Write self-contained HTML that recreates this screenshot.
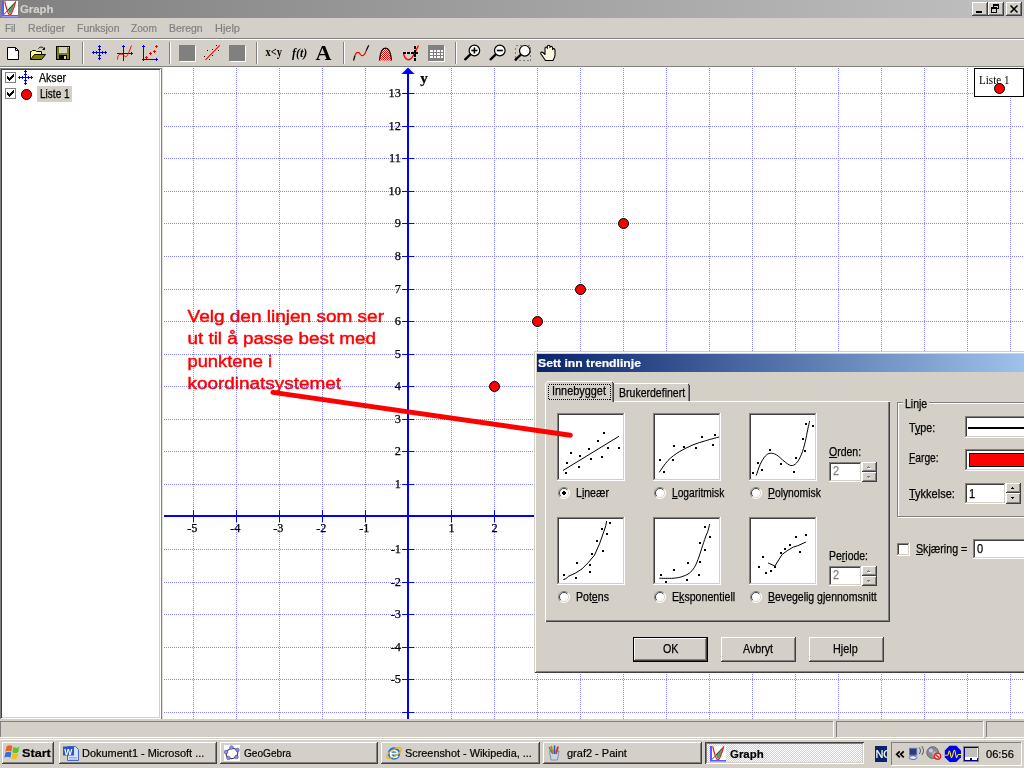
<!DOCTYPE html>
<html lang="no"><head><meta charset="utf-8"><title>Graph</title>
<style>
*{box-sizing:border-box}
html,body{margin:0;padding:0}
body{width:1024px;height:768px;overflow:hidden;background:#d4d0c8;position:relative;font-family:"Liberation Sans",sans-serif;font-size:11px;color:#000}
.a{position:absolute}
.t{position:absolute;white-space:nowrap;line-height:14px;font-size:11px;-webkit-text-stroke:.2px currentColor}
.ms{position:absolute;white-space:nowrap;font-size:12.5px;line-height:14px;transform:scaleX(.88);transform-origin:0 0;-webkit-text-stroke:.25px currentColor}
.ms u{text-decoration:underline;text-underline-offset:1px;text-decoration-thickness:1px}
.raised{box-shadow:inset -1px -1px #404040,inset 1px 1px #fff,inset -2px -2px #808080,inset 2px 2px #d4d0c8;background:#d4d0c8}
.sunken{box-shadow:inset -1px -1px #fff,inset 1px 1px #808080,inset -2px -2px #d4d0c8,inset 2px 2px #404040;background:#fff}
.thin-sunken{box-shadow:inset -1px -1px #fff,inset 1px 1px #808080}
.sep{position:absolute;width:2px;border-left:1px solid #808080;border-right:1px solid #fff}
svg{position:absolute;overflow:visible}
.btn{position:absolute;height:25px;width:75px}
</style></head>
<body>
<div id="screen" style="position:absolute;left:0;top:0;width:1024px;height:768px;overflow:hidden;will-change:transform">
<div class="a" id="titlebar" style="left:0;top:0;width:1024px;height:18px;background:linear-gradient(to right,#808080,#c0c0c0)"></div>
<span class="t" id="L-title" style="left:19.61px;top:2px;transform:scaleX(0.9892);transform-origin:0 0;font-weight:bold;color:#d4d0c8;font-size:11.5px;">Graph</span>
<div class="a raised" id="tb-min" style="left:972px;top:2px;width:16px;height:14px"></div>
<div class="a raised" id="tb-max" style="left:988px;top:2px;width:16px;height:14px"></div>
<div class="a raised" id="tb-close" style="left:1006px;top:2px;width:16px;height:14px"></div>
<svg style="left:0;top:0" width="1024" height="768" viewBox="0 0 1024 768" ><g transform="translate(2,1)"><rect x="0" y="0" width="16" height="16" fill="#fff"/><path d="M5.6,8.6 L12.6,1.4 L10.2,9.5 L8,13.6 Z" fill="#3aa860"/><path d="M0.5,15 L13.5,1" fill="none" stroke="#303030" stroke-width="0.8"/><path d="M2.7,0.3 C4.5,8 6.3,14 8,14 C9.7,14 11.8,7 13.7,0.3" fill="none" stroke="#f01818" stroke-width="1.3"/><g shape-rendering="crispEdges" fill="#5a5aff"><rect x="0" y="0" width="2" height="15"/><rect x="0" y="14" width="16" height="1"/></g><rect x="0" y="15" width="16" height="1" fill="#9898ff" shape-rendering="crispEdges"/></g><g fill="#000" shape-rendering="crispEdges"><rect x="976" y="11" width="6" height="2"/><g transform="translate(-1,-1)"><rect x="994" y="5" width="6" height="2"/><rect x="994" y="7" width="1" height="1"/><rect x="999" y="7" width="1" height="3"/><rect x="998" y="9" width="1" height="1"/><rect x="992" y="8" width="6" height="2"/><rect x="992" y="10" width="1" height="3"/><rect x="997" y="10" width="1" height="3"/><rect x="992" y="13" width="6" height="1"/></g></g><path d="M1010.5,5.5 L1017.5,12.5 M1017.5,5.5 L1010.5,12.5" stroke="#000" stroke-width="1.6" fill="none"/></svg>
<div class="a" id="menubar" style="left:0;top:18px;width:1024px;height:20px;background:#d4d0c8"></div>
<span class="t" id="L-menuFil" style="left:5.21px;top:21px;transform:scaleX(0.9080);transform-origin:0 0;color:#808080;">Fil</span>
<span class="t" id="L-menuRediger" style="left:27.70px;top:21px;transform:scaleX(0.9643);transform-origin:0 0;color:#808080;">Rediger</span>
<span class="t" id="L-menuFunksjon" style="left:76.70px;top:21px;transform:scaleX(0.9527);transform-origin:0 0;color:#808080;">Funksjon</span>
<span class="t" id="L-menuZoom" style="left:131.37px;top:21px;transform:scaleX(0.9201);transform-origin:0 0;color:#808080;">Zoom</span>
<span class="t" id="L-menuBeregn" style="left:169.20px;top:21px;transform:scaleX(0.9491);transform-origin:0 0;color:#808080;">Beregn</span>
<span class="t" id="L-menuHjelp" style="left:214.51px;top:21px;transform:scaleX(0.9928);transform-origin:0 0;color:#808080;">Hjelp</span>
<div class="a" style="left:0;top:38px;width:1024px;height:1px;background:#808080"></div>
<div class="a" style="left:0;top:39px;width:1024px;height:1px;background:#fff"></div>
<div class="a" id="toolbar" style="left:0;top:40px;width:1024px;height:26px;background:#d4d0c8"></div>
<div class="sep" style="left:82px;top:42px;height:22px"></div>
<div class="sep" style="left:169px;top:42px;height:22px"></div>
<div class="sep" style="left:256px;top:42px;height:22px"></div>
<div class="sep" style="left:343px;top:42px;height:22px"></div>
<div class="sep" style="left:455px;top:42px;height:22px"></div>
<svg style="left:0;top:0" width="1024" height="768" viewBox="0 0 1024 768" ><path d="M7.5,47.5 H15.5 L18.5,50.5 V59.5 H7.5 Z" fill="#fff" stroke="#000" stroke-width="1"/><path d="M15.5,47.5 V50.5 H18.5" fill="none" stroke="#000" stroke-width="1"/><path d="M30.5,59.5 V51.5 H31.5 L32.5,50.5 H35.5 L36.5,51.5 H41.5 V54.5" fill="#ffff80" stroke="#000" stroke-width="1"/><path d="M30.5,59.5 L34.5,54.5 H45.5 L41.5,59.5 Z" fill="#808000" stroke="#000" stroke-width="1"/><path d="M38.5,48.5 C40,46.5 43,46.5 44.5,49.5 M42.5,49.5 H44.5 V47.5" fill="none" stroke="#000" stroke-width="1"/><g shape-rendering="crispEdges"><rect x="56" y="46" width="14" height="14" fill="#000"/><rect x="57" y="47" width="12" height="12" fill="#808000"/><rect x="59" y="47" width="8" height="6" fill="#d4d0c8"/><rect x="59" y="55" width="8" height="4" fill="#000"/><rect x="64" y="56" width="2" height="3" fill="#d4d0c8"/><rect x="68" y="47" width="1" height="1" fill="#d4d0c8"/></g><g fill="#0000ff" shape-rendering="crispEdges"><rect x="92" y="52" width="15" height="1"/><rect x="99" y="45" width="1" height="15"/><rect x="98" y="46" width="3" height="1"/><rect x="98" y="58" width="3" height="1"/><rect x="93" y="51" width="1" height="3"/><rect x="105" y="51" width="1" height="3"/><rect x="98" y="49" width="3" height="1"/><rect x="98" y="55" width="3" height="1"/><rect x="96" y="51" width="1" height="3"/><rect x="102" y="51" width="1" height="3"/></g><g fill="#0000ff" shape-rendering="crispEdges"><rect x="123" y="45" width="1" height="16"/><rect x="117" y="53" width="16" height="1"/><rect x="122" y="46" width="3" height="1"/><rect x="131" y="52" width="1" height="3"/></g><path d="M117.5,59.5 C117.5,53 122,53 124.5,56 C127,59 129,52 131.5,45.5" fill="none" stroke="#ff0000" stroke-width="1"/><g fill="#0000ff" shape-rendering="crispEdges"><rect x="143" y="45" width="1" height="16"/><rect x="142" y="59" width="16" height="1"/><rect x="142" y="46" width="3" height="1"/><rect x="156" y="58" width="1" height="3"/></g><g fill="#ff0000" shape-rendering="crispEdges"><rect x="155" y="46" width="3" height="1"/><rect x="156" y="45" width="1" height="3"/><rect x="153" y="51" width="3" height="1"/><rect x="154" y="50" width="1" height="3"/><rect x="149" y="53" width="3" height="1"/><rect x="150" y="52" width="1" height="3"/><rect x="145" y="57" width="3" height="1"/><rect x="146" y="56" width="1" height="3"/></g><g shape-rendering="crispEdges"><rect x="180" y="46" width="16" height="16" fill="#fff"/><rect x="179" y="45" width="16" height="16" fill="#808080"/></g><g shape-rendering="crispEdges"><rect x="230" y="46" width="16" height="16" fill="#fff"/><rect x="229" y="45" width="16" height="16" fill="#808080"/></g><line x1="205.5" y1="59.8" x2="219.8" y2="45.3" stroke="#ff0000" stroke-width="1.1"/><g fill="#000" shape-rendering="crispEdges"><rect x="216" y="45" width="1" height="1"/><rect x="207" y="50" width="1" height="1"/><rect x="212" y="49" width="1" height="1"/><rect x="218" y="50" width="1" height="1"/><rect x="212" y="55" width="1" height="1"/><rect x="204" y="56" width="1" height="1"/><rect x="209" y="59" width="1" height="1"/></g><text x="265.5" y="56.3" font-family="'Liberation Serif',serif" font-weight="bold" font-size="11.5px" textLength="16.5" lengthAdjust="spacingAndGlyphs">x&lt;y</text><text x="292" y="56.6" font-family="'Liberation Serif',serif" font-weight="bold" font-style="italic" font-size="11.5px" textLength="15.3" lengthAdjust="spacingAndGlyphs">f(t)</text><text x="315.5" y="60" font-family="'Liberation Serif',serif" font-weight="bold" font-size="20.5px" textLength="16" lengthAdjust="spacingAndGlyphs">A</text><path d="M353.5,60.5 L355,55.5" fill="none" stroke="#000" stroke-width="1.2"/><path d="M355,55.5 C356.5,51 359,52 360.5,54.5 C362.5,57.5 365,54.5 366.3,50.5" fill="none" stroke="#ff0000" stroke-width="1.2"/><path d="M366.3,50.5 L368.7,45.3" fill="none" stroke="#000" stroke-width="1.2"/><defs><pattern id="dith" width="2" height="2" patternUnits="userSpaceOnUse"><rect x="0" y="0" width="1" height="1" fill="#ff0000"/><rect x="1" y="1" width="1" height="1" fill="#ff0000"/><rect x="1" y="0" width="1" height="1" fill="#fff"/><rect x="0" y="1" width="1" height="1" fill="#fff"/></pattern></defs><path d="M379.5,60.5 C381,44 390,44 391.5,60.5 Z" fill="url(#dith)" stroke="none"/><path d="M379.5,60.5 C381,44 390,44 391.5,60.5" fill="none" stroke="#000" stroke-width="1.2"/><path d="M403.5,53.5 C405,60.5 410,62 413,56 C415,52 417,49 418.5,45.5" fill="none" stroke="#ff0000" stroke-width="1.3"/><g fill="#000" shape-rendering="crispEdges"><rect x="403" y="52" width="3" height="2"/><rect x="407" y="52" width="3" height="2"/><rect x="411" y="52" width="3" height="2"/><rect x="415" y="52" width="3" height="2"/><rect x="414" y="46" width="2" height="3"/><rect x="414" y="50" width="2" height="3"/><rect x="414" y="54" width="2" height="3"/><rect x="414" y="58" width="2" height="3"/></g><g shape-rendering="crispEdges"><rect x="429" y="46" width="16" height="16" fill="#fff"/><rect x="428" y="45" width="16" height="16" fill="#808080"/><rect x="430.0" y="50" width="2.5" height="2" fill="#fff"/><rect x="433.5" y="50" width="2.5" height="2" fill="#fff"/><rect x="437.0" y="50" width="2.5" height="2" fill="#fff"/><rect x="440.5" y="50" width="2.5" height="2" fill="#fff"/><rect x="430.0" y="53" width="2.5" height="2" fill="#fff"/><rect x="433.5" y="53" width="2.5" height="2" fill="#fff"/><rect x="437.0" y="53" width="2.5" height="2" fill="#fff"/><rect x="440.5" y="53" width="2.5" height="2" fill="#fff"/><rect x="430.0" y="56" width="2.5" height="2" fill="#fff"/><rect x="433.5" y="56" width="2.5" height="2" fill="#fff"/><rect x="437.0" y="56" width="2.5" height="2" fill="#fff"/><rect x="440.5" y="56" width="2.5" height="2" fill="#fff"/></g><line x1="465.2" y1="59.3" x2="470.09999999999997" y2="54.7" stroke="#000" stroke-width="2.4" stroke-linecap="round"/><circle cx="474.4" cy="50.5" r="5.3" fill="#fff" fill-opacity="0.9" stroke="#000" stroke-width="1.2"/><rect x="471.4" y="49.7" width="6" height="1.6" fill="#000"/><rect x="473.59999999999997" y="47.5" width="1.6" height="6" fill="#000"/><line x1="490.6" y1="59.3" x2="495.5" y2="54.7" stroke="#000" stroke-width="2.4" stroke-linecap="round"/><circle cx="499.8" cy="50.5" r="5.3" fill="#fff" fill-opacity="0.9" stroke="#000" stroke-width="1.2"/><rect x="496.8" y="49.7" width="6" height="1.6" fill="#000"/><rect x="515.5" y="45.5" width="15" height="15" fill="none" stroke="#808080" stroke-width="1" stroke-dasharray="2 2" shape-rendering="crispEdges"/><line x1="515.5999999999999" y1="59.599999999999994" x2="520.5" y2="55.0" stroke="#000" stroke-width="2.4" stroke-linecap="round"/><circle cx="524.8" cy="50.8" r="5.3" fill="#fff" fill-opacity="0.9" stroke="#000" stroke-width="1.2"/><path d="M545.5,60.5 L541,54 C540,52 542,51.5 543.5,53 L545,54.5 V48.5 C545,46.5 547,46.5 547.3,48.5 V46.5 C547.5,44.8 549.8,44.8 550,46.5 V47.5 C550.3,45.8 552.5,46 552.6,48 V49.5 C553,48 555,48.3 555,50.5 V55 C555,57.5 553.5,58.5 553,60.5 Z" fill="#fff8e0" stroke="#000" stroke-width="1.1" stroke-linejoin="round"/></svg>
<div class="a" style="left:0;top:66px;width:1024px;height:1px;background:#808080"></div>
<div class="a" style="left:0;top:67px;width:162px;height:1px;background:#fff"></div>
<div class="a" id="leftpanel" style="left:0;top:68px;width:161px;height:651px;background:#fff;box-shadow:inset 1px 1px #808080,inset -1px -1px #fff,inset 2px 2px #404040,inset -2px -2px #d4d0c8"></div>
<svg style="left:0;top:0" width="1024" height="768" viewBox="0 0 1024 768" ><g shape-rendering="crispEdges"><rect x="5.5" y="72.5" width="10" height="10" fill="#fff" stroke="#808080" stroke-width="1"/></g><g fill="#000" shape-rendering="crispEdges"><rect x="7" y="76" width="1" height="3"/><rect x="8" y="77" width="1" height="3"/><rect x="9" y="78" width="1" height="3"/><rect x="10" y="77" width="1" height="3"/><rect x="11" y="76" width="1" height="3"/><rect x="12" y="75" width="1" height="3"/><rect x="13" y="74" width="1" height="3"/></g><g shape-rendering="crispEdges"><rect x="5.5" y="88.5" width="10" height="10" fill="#fff" stroke="#808080" stroke-width="1"/></g><g fill="#000" shape-rendering="crispEdges"><rect x="7" y="92" width="1" height="3"/><rect x="8" y="93" width="1" height="3"/><rect x="9" y="94" width="1" height="3"/><rect x="10" y="93" width="1" height="3"/><rect x="11" y="92" width="1" height="3"/><rect x="12" y="91" width="1" height="3"/><rect x="13" y="90" width="1" height="3"/></g><g fill="#0000ff" shape-rendering="crispEdges"><rect x="18" y="77" width="15" height="1"/><rect x="25" y="70" width="1" height="15"/><rect x="24" y="71" width="3" height="1"/><rect x="24" y="83" width="3" height="1"/><rect x="19" y="76" width="1" height="3"/><rect x="31" y="76" width="1" height="3"/><rect x="24" y="74" width="3" height="1"/><rect x="24" y="80" width="3" height="1"/><rect x="22" y="76" width="1" height="3"/><rect x="28" y="76" width="1" height="3"/></g><circle cx="26.5" cy="94.5" r="5" fill="#ff0000" stroke="#000" stroke-width="1"/></svg>
<div class="a" style="left:37px;top:86px;width:35px;height:16px;background:#d4d0c8"></div>
<span class="ms" id="L-akser" style="left:39.42px;top:71px;transform:scaleX(0.8469);transform-origin:0 0;">Akser</span>
<span class="ms" id="L-liste1" style="left:39.50px;top:87px;transform:scaleX(0.8039);transform-origin:0 0;">Liste 1</span>
<div class="a" style="left:161px;top:68px;width:1px;height:651px;background:#808080"></div>
<div class="a" style="left:162px;top:67px;width:1px;height:652px;background:#e2dfd8"></div>
<div class="a" id="graph" style="left:163px;top:67px;width:861px;height:652px;background:#fff"></div>
<svg id="plot" style="left:163px;top:67px" width="861" height="652" viewBox="163 67 861 652">
<g shape-rendering="crispEdges" stroke="#8484ff" stroke-width="1" stroke-dasharray="1 1" fill="none">
<line x1="193.5" y1="68" x2="193.5" y2="719"/><line x1="236.5" y1="68" x2="236.5" y2="719"/><line x1="279.5" y1="68" x2="279.5" y2="719"/><line x1="322.5" y1="68" x2="322.5" y2="719"/><line x1="365.5" y1="68" x2="365.5" y2="719"/><line x1="451.5" y1="68" x2="451.5" y2="719"/><line x1="494.5" y1="68" x2="494.5" y2="719"/><line x1="537.5" y1="68" x2="537.5" y2="719"/><line x1="580.5" y1="68" x2="580.5" y2="719"/><line x1="623.5" y1="68" x2="623.5" y2="719"/><line x1="666.5" y1="68" x2="666.5" y2="719"/><line x1="709.5" y1="68" x2="709.5" y2="719"/><line x1="752.5" y1="68" x2="752.5" y2="719"/><line x1="795.5" y1="68" x2="795.5" y2="719"/><line x1="838.5" y1="68" x2="838.5" y2="719"/><line x1="881.5" y1="68" x2="881.5" y2="719"/><line x1="924.5" y1="68" x2="924.5" y2="719"/><line x1="967.5" y1="68" x2="967.5" y2="719"/><line x1="1010.5" y1="68" x2="1010.5" y2="719"/>
<line x1="164" y1="712.5" x2="1024" y2="712.5"/><line x1="164" y1="679.5" x2="1024" y2="679.5"/><line x1="164" y1="647.5" x2="1024" y2="647.5"/><line x1="164" y1="614.5" x2="1024" y2="614.5"/><line x1="164" y1="582.5" x2="1024" y2="582.5"/><line x1="164" y1="549.5" x2="1024" y2="549.5"/><line x1="164" y1="484.5" x2="1024" y2="484.5"/><line x1="164" y1="451.5" x2="1024" y2="451.5"/><line x1="164" y1="419.5" x2="1024" y2="419.5"/><line x1="164" y1="386.5" x2="1024" y2="386.5"/><line x1="164" y1="354.5" x2="1024" y2="354.5"/><line x1="164" y1="321.5" x2="1024" y2="321.5"/><line x1="164" y1="289.5" x2="1024" y2="289.5"/><line x1="164" y1="256.5" x2="1024" y2="256.5"/><line x1="164" y1="223.5" x2="1024" y2="223.5"/><line x1="164" y1="191.5" x2="1024" y2="191.5"/><line x1="164" y1="158.5" x2="1024" y2="158.5"/><line x1="164" y1="126.5" x2="1024" y2="126.5"/><line x1="164" y1="93.5" x2="1024" y2="93.5"/>
</g>
<g shape-rendering="crispEdges" fill="#0000ff">
<rect x="407" y="73" width="2" height="646"/><rect x="164" y="515" width="860" height="2"/>
<rect x="402" y="712" width="12" height="1"/><rect x="402" y="679" width="12" height="1"/><rect x="402" y="647" width="12" height="1"/><rect x="402" y="614" width="12" height="1"/><rect x="402" y="582" width="12" height="1"/><rect x="402" y="549" width="12" height="1"/><rect x="402" y="484" width="12" height="1"/><rect x="402" y="451" width="12" height="1"/><rect x="402" y="419" width="12" height="1"/><rect x="402" y="386" width="12" height="1"/><rect x="402" y="354" width="12" height="1"/><rect x="402" y="321" width="12" height="1"/><rect x="402" y="289" width="12" height="1"/><rect x="402" y="256" width="12" height="1"/><rect x="402" y="223" width="12" height="1"/><rect x="402" y="191" width="12" height="1"/><rect x="402" y="158" width="12" height="1"/><rect x="402" y="126" width="12" height="1"/><rect x="402" y="93" width="12" height="1"/>
<rect x="193" y="510" width="1" height="12"/><rect x="236" y="510" width="1" height="12"/><rect x="279" y="510" width="1" height="12"/><rect x="322" y="510" width="1" height="12"/><rect x="365" y="510" width="1" height="12"/><rect x="451" y="510" width="1" height="12"/><rect x="494" y="510" width="1" height="12"/><rect x="537" y="510" width="1" height="12"/><rect x="580" y="510" width="1" height="12"/><rect x="623" y="510" width="1" height="12"/><rect x="666" y="510" width="1" height="12"/><rect x="709" y="510" width="1" height="12"/><rect x="752" y="510" width="1" height="12"/><rect x="795" y="510" width="1" height="12"/><rect x="838" y="510" width="1" height="12"/><rect x="881" y="510" width="1" height="12"/><rect x="924" y="510" width="1" height="12"/><rect x="967" y="510" width="1" height="12"/><rect x="1010" y="510" width="1" height="12"/>
</g>
<polygon points="408,67.5 401.5,74 414.5,74" fill="#0000ff"/>
<g font-family="'Liberation Serif',serif" font-size="12.3px" fill="#000" stroke="#000" stroke-width="0.25">
<text x="400.9" y="683.1" text-anchor="end">-5</text><text x="400.9" y="651.1" text-anchor="end">-4</text><text x="400.9" y="618.1" text-anchor="end">-3</text><text x="400.9" y="586.1" text-anchor="end">-2</text><text x="400.9" y="553.1" text-anchor="end">-1</text><text x="400.9" y="488.1" text-anchor="end">1</text><text x="400.9" y="455.1" text-anchor="end">2</text><text x="400.9" y="423.1" text-anchor="end">3</text><text x="400.9" y="390.1" text-anchor="end">4</text><text x="400.9" y="358.1" text-anchor="end">5</text><text x="400.9" y="325.1" text-anchor="end">6</text><text x="400.9" y="293.1" text-anchor="end">7</text><text x="400.9" y="260.1" text-anchor="end">8</text><text x="400.9" y="227.1" text-anchor="end">9</text><text x="400.9" y="195.1" text-anchor="end">10</text><text x="400.9" y="162.1" text-anchor="end">11</text><text x="400.9" y="130.1" text-anchor="end">12</text><text x="400.9" y="97.1" text-anchor="end">13</text>
<text x="192.3" y="532" text-anchor="middle">-5</text><text x="235.3" y="532" text-anchor="middle">-4</text><text x="278.3" y="532" text-anchor="middle">-3</text><text x="321.3" y="532" text-anchor="middle">-2</text><text x="364.3" y="532" text-anchor="middle">-1</text><text x="451.6" y="532" text-anchor="middle">1</text><text x="494.6" y="532" text-anchor="middle">2</text><text x="537.6" y="532" text-anchor="middle">3</text><text x="580.6" y="532" text-anchor="middle">4</text><text x="623.6" y="532" text-anchor="middle">5</text><text x="666.6" y="532" text-anchor="middle">6</text><text x="709.6" y="532" text-anchor="middle">7</text><text x="752.6" y="532" text-anchor="middle">8</text><text x="795.6" y="532" text-anchor="middle">9</text><text x="838.6" y="532" text-anchor="middle">10</text><text x="881.6" y="532" text-anchor="middle">11</text><text x="924.6" y="532" text-anchor="middle">12</text><text x="967.6" y="532" text-anchor="middle">13</text><text x="1010.6" y="532" text-anchor="middle">14</text>
<text x="420.2" y="82.8" font-weight="bold" font-size="15px">y</text>
</g>
<circle cx="494.5" cy="386.5" r="5" fill="#ff0000" stroke="#000" stroke-width="1"/><circle cx="537.5" cy="321.5" r="5" fill="#ff0000" stroke="#000" stroke-width="1"/><circle cx="580.5" cy="289.5" r="5" fill="#ff0000" stroke="#000" stroke-width="1"/><circle cx="623.5" cy="223.5" r="5" fill="#ff0000" stroke="#000" stroke-width="1"/>
<rect x="974.5" y="68.5" width="49" height="28" fill="#fff" stroke="#000" stroke-width="1" shape-rendering="crispEdges"/>
<text x="979" y="83.5" font-family="'Liberation Serif',serif" font-size="12.3px" textLength="30.5" lengthAdjust="spacingAndGlyphs">Liste 1</text>
<circle cx="999.5" cy="88.5" r="5" fill="#ff0000" stroke="#000" stroke-width="1"/>
<g font-family="'Liberation Sans',sans-serif" font-size="17.4px" fill="#ff0000" stroke="#ff0000" stroke-width="0.45">
<text x="187.5" y="322.3" textLength="196.5" lengthAdjust="spacingAndGlyphs">Velg den linjen som ser</text><text x="187.5" y="344.4" textLength="188.5" lengthAdjust="spacingAndGlyphs">ut til å passe best med</text><text x="187.5" y="366.5" textLength="84.5" lengthAdjust="spacingAndGlyphs">punktene i</text><text x="187.5" y="388.6" textLength="153.5" lengthAdjust="spacingAndGlyphs">koordinatsystemet</text>
</g>
</svg>
<div class="a" id="statusbar" style="left:0;top:719px;width:1024px;height:19px;background:#d4d0c8"></div>
<div class="a thin-sunken" style="left:0px;top:721px;width:834px;height:17px"></div>
<div class="a thin-sunken" style="left:836px;top:721px;width:148px;height:17px"></div>
<div class="a thin-sunken" style="left:986px;top:721px;width:40px;height:17px"></div>
<div class="a" id="taskbar" style="left:0;top:738px;width:1024px;height:30px;background:#d4d0c8;border-top:1px solid #d4d0c8"></div>
<div class="a" style="left:0;top:739px;width:1024px;height:1px;background:#fff"></div>
<div class="a raised" id="start" style="left:2px;top:742px;width:52px;height:22px"></div>
<span class="t" id="L-start" style="left:21.70px;top:746px;transform:scaleX(1.1000);transform-origin:0 0;font-weight:bold;font-size:11.5px;">Start</span>
<div class="a raised" style="left:59px;top:742px;width:158px;height:22px"></div>
<span class="t" id="L-task6" style="left:82.00px;top:746px;transform:scaleX(0.9950);transform-origin:0 0;">Dokument1 - Microsoft ...</span>
<div class="a raised" style="left:220px;top:742px;width:158px;height:22px"></div>
<span class="t" id="L-task22" style="left:244.00px;top:746px;transform:scaleX(0.9192);transform-origin:0 0;">GeoGebra</span>
<div class="a raised" style="left:381px;top:742px;width:159px;height:22px"></div>
<span class="t" id="L-task38" style="left:404.50px;top:746px;transform:scaleX(0.9880);transform-origin:0 0;">Screenshot - Wikipedia, ...</span>
<div class="a raised" style="left:543px;top:742px;width:159px;height:22px"></div>
<span class="t" id="L-task54" style="left:566.50px;top:746px;transform:scaleX(0.9987);transform-origin:0 0;">graf2 - Paint</span>
<div class="a" style="left:705px;top:742px;width:159px;height:22px;background:#d4d0c8 repeating-conic-gradient(#fff 0% 25%, #d4d0c8 0% 50%) 0 0/2px 2px;box-shadow:inset 1px 1px #404040,inset -1px -1px #fff,inset 2px 2px #808080,inset -2px -2px #d4d0c8"></div>
<span class="t" id="L-task70" style="left:730.00px;top:747px;transform:scaleX(0.9929);transform-origin:0 0;font-weight:bold;font-size:11.5px;">Graph</span>
<div class="a" style="left:875px;top:746px;width:12px;height:16px;background:#0a246a;overflow:hidden"><span class="t" style="left:0.5px;top:1px;color:#fff;font-size:11px;letter-spacing:-.3px">NO</span></div>
<div class="a thin-sunken" style="left:891px;top:742px;width:131px;height:24px"></div>
<span class="t" id="L-clock" style="left:985.99px;top:746.8px;transform:scaleX(1.0114);transform-origin:0 0;">06:56</span>
<svg style="left:0;top:0" width="1024" height="768" viewBox="0 0 1024 768" ><g transform="translate(5.4,743.8)"><path d="M1,3 C3,1 5,1 7,2.5 L6,8 C4,6.5 2,6.5 0,8 Z" fill="#f06020"/><path d="M8,3 C10,4.5 12,4.5 14,2.5 L13,8 C11,10 9,10 7,8.5 Z" fill="#60c030"/><path d="M0,9 C2,7.5 4,7.5 6,9 L5,14 C3,12.5 1,12.5 -1,14 Z" fill="#3070e0"/><path d="M7,9.5 C9,11 11,11 13,9 L12,14 C10,16 8,16 6,14.5 Z" fill="#f0c020"/></g><g transform="translate(63,745)"><path d="M4.5,1.5 H12.5 L15.5,4.5 V15.5 H4.5 Z" fill="#d4e2fc" stroke="#4868c0" stroke-width="1"/><rect x="0" y="1.5" width="11" height="9" fill="#2858c0"/><text x="1.2" y="9.5" font-family="'Liberation Sans',sans-serif" font-weight="bold" font-size="8.5px" fill="#fff">W</text><path d="M6,12.5 H14 M6,14 H14" stroke="#90a8d8" stroke-width="0.8"/></g><g transform="translate(224,745)"><rect x="0" y="0" width="16" height="16" fill="#fff"/><ellipse cx="8" cy="8.5" rx="6" ry="5" fill="none" stroke="#404040" stroke-width="1.2" transform="rotate(-20 8 8.5)"/><circle cx="7.5" cy="2.5" r="1.8" fill="#9090f0" stroke="#4040a0" stroke-width="0.6"/><circle cx="13.5" cy="5" r="1.8" fill="#9090f0" stroke="#4040a0" stroke-width="0.6"/><circle cx="12.5" cy="12" r="1.8" fill="#9090f0" stroke="#4040a0" stroke-width="0.6"/><circle cx="4.5" cy="13" r="1.8" fill="#9090f0" stroke="#4040a0" stroke-width="0.6"/><circle cx="2" cy="7" r="1.8" fill="#9090f0" stroke="#4040a0" stroke-width="0.6"/></g><g transform="translate(386,745)"><circle cx="8" cy="8.5" r="6.2" fill="#1c74d4"/><path d="M4,8.7 H12 M4.5,8.5 C4.5,4.5 11.5,4.5 11.8,8.5 M4.5,8.7 C4.5,13 10,13.3 11.8,10.8" stroke="#fff" stroke-width="1.7" fill="none"/><ellipse cx="8" cy="8" rx="8.5" ry="3.2" fill="none" stroke="#f0b020" stroke-width="1.3" transform="rotate(-32 8 8)"/></g><g transform="translate(547,745)"><path d="M2.5,6 L4,15 H10.5 L12,6 Z" fill="#c8d4e8" stroke="#7080a0" stroke-width="0.8"/><path d="M4,1 L6,9" stroke="#e07020" stroke-width="1.8"/><path d="M7.5,0.5 L7.5,9" stroke="#2060c0" stroke-width="1.6"/><path d="M11,1.5 L9,9" stroke="#d03030" stroke-width="1.8"/><path d="M2,2 L5,8" stroke="#30a040" stroke-width="1.4"/></g><g transform="translate(710,746)"><rect x="0" y="0" width="16" height="16" fill="#fff"/><path d="M5.6,8.6 L12.6,1.4 L10.2,9.5 L8,13.6 Z" fill="#3aa860"/><path d="M0.5,15 L13.5,1" fill="none" stroke="#303030" stroke-width="0.8"/><path d="M2.7,0.3 C4.5,8 6.3,14 8,14 C9.7,14 11.8,7 13.7,0.3" fill="none" stroke="#f01818" stroke-width="1.3"/><g shape-rendering="crispEdges" fill="#5a5aff"><rect x="0" y="0" width="2" height="15"/><rect x="0" y="14" width="16" height="1"/></g><rect x="0" y="15" width="16" height="1" fill="#9898ff" shape-rendering="crispEdges"/></g><path d="M899.8,751.3 L896.6,754.3 L899.8,757.3 M903.8,751.3 L900.6,754.3 L903.8,757.3" fill="none" stroke="#000" stroke-width="1.7"/><rect x="909.5" y="748.3" width="7.3" height="6.8" fill="#38386a" stroke="#5878d0" stroke-width="0.9"/><ellipse cx="913" cy="757.6" rx="3.8" ry="1.9" fill="#e4ecff" stroke="#3858b8" stroke-width="0.9"/><path d="M919.3,747.5 C920.8,749.5 920.8,752 919.3,754 M921.8,746.2 C924,749 924,752.5 921.8,755" stroke="#404040" stroke-width="0.9" fill="none"/><circle cx="932.7" cy="752.6" r="5.9" fill="#8c8c8c" stroke="#585858" stroke-width="0.8"/><circle cx="931" cy="750.6" r="2.6" fill="#c8c8d8" stroke="#6868a0" stroke-width="0.7"/><circle cx="934.5" cy="753.5" r="2.3" fill="#b0b0b0"/><circle cx="937.6" cy="756.3" r="3.7" fill="#e82020"/><circle cx="937.6" cy="756.3" r="2.3" fill="#fff"/><path d="M935.9,754.9 L939.3,757.7" stroke="#e82020" stroke-width="1.5"/><path d="M949.5,745.7 H956.3 L961,750.4 V757.2 L956.3,761.9 H949.5 L944.8,757.2 V750.4 Z" fill="#0000f0"/><path d="M944.8,755.3 H947.6 C948.5,755.3 948.6,751 949.4,751 C950.4,751 950.6,757.6 951.6,757.6 C952.8,757.6 953.2,750.2 954.4,750.2 C955.6,750.2 955.6,757.6 956.6,757.6 C957.4,757.6 957.4,754.5 958.4,754.5 H961" stroke="#ffe800" stroke-width="1.1" fill="none"/><g shape-rendering="crispEdges"><rect x="963" y="746" width="16" height="16" fill="#808080"/><rect x="964" y="747" width="14" height="14" fill="#000080"/><rect x="965" y="748" width="13" height="10" fill="#fff"/><rect x="965" y="748" width="12" height="9" fill="#c0c0c0"/><rect x="965" y="758" width="5" height="2" fill="#fff"/><rect x="972" y="758" width="5" height="2" fill="#fff"/><rect x="964" y="747" width="14" height="1" fill="#000080"/></g></svg>
<div class="a" id="dialog" style="left:534px;top:351px;width:500px;height:322px;background:#d4d0c8;box-shadow:inset 1px 1px #d4d0c8,inset -1px -1px #404040,inset 2px 2px #fff,inset -2px -2px #808080"></div>
<div class="a" id="dlgtitle" style="left:537px;top:354px;width:512px;height:18px;background:linear-gradient(to right,#0a246a,#a6caf0)"></div>
<span class="t" id="L-dlgtitle" style="left:537.83px;top:356px;transform:scaleX(1.0599);transform-origin:0 0;font-weight:bold;color:#fff;font-size:11.5px;">Sett inn trendlinje</span>
<div class="a" id="tabpage" style="left:545px;top:401px;width:345px;height:221px;box-shadow:inset 1px 1px #fff,inset -1px -1px #404040,inset -2px -2px #808080"></div>
<div class="a" id="tab2" style="left:614px;top:383px;width:76px;height:18px;background:#d4d0c8;box-shadow:inset 0 1px #fff,inset -1px 0 #404040,inset -2px 0 #808080"></div>
<div class="a" id="tab1" style="left:545px;top:381px;width:69px;height:21px;background:#d4d0c8;box-shadow:inset 1px 1px #fff,inset -1px 0 #404040,inset -2px 0 #808080"></div>
<div class="a" style="left:545px;top:381px;width:2px;height:2px;background:#d4d0c8"></div><div class="a" style="left:546px;top:382px;width:1px;height:1px;background:#fff"></div>
<div class="a" style="left:612px;top:381px;width:2px;height:2px;background:#d4d0c8"></div><div class="a" style="left:612px;top:382px;width:1px;height:1px;background:#404040"></div>
<div class="a" style="left:688px;top:383px;width:2px;height:2px;background:#d4d0c8"></div><div class="a" style="left:688px;top:384px;width:1px;height:1px;background:#404040"></div>
<svg style="left:548px;top:384px" width="63" height="16" viewBox="0 0 63 16" shape-rendering="crispEdges"><rect x="0.5" y="0.5" width="62" height="15" fill="none" stroke="#000" stroke-width="1" stroke-dasharray="1 1"/></svg>
<span class="ms" id="L-tab1" style="left:552.30px;top:384px;transform:scaleX(0.8724);transform-origin:0 0;">Innebygget</span>
<span class="ms" id="L-tab2" style="left:618.63px;top:386px;transform:scaleX(0.8424);transform-origin:0 0;">Brukerdefinert</span>
<div class="a sunken" style="left:557px;top:413px;width:68px;height:68px"></div>
<svg style="left:0;top:0" width="1024" height="768" viewBox="0 0 1024 768"><g fill="#000" shape-rendering="crispEdges"><rect x="603" y="432" width="2" height="2"/><rect x="597" y="440" width="2" height="2"/><rect x="588" y="448" width="2" height="2"/><rect x="570" y="452" width="2" height="2"/><rect x="579" y="455" width="2" height="2"/><rect x="607" y="447" width="2" height="2"/><rect x="618" y="447" width="2" height="2"/><rect x="601" y="456" width="2" height="2"/><rect x="590" y="458" width="2" height="2"/><rect x="566" y="462" width="2" height="2"/><rect x="578" y="466" width="2" height="2"/><rect x="565" y="472" width="2" height="2"/></g><path d="M563.00,470.50 L619.00,436.25" fill="none" stroke="#000" stroke-width="1"/></svg>
<div class="a sunken" style="left:653px;top:413px;width:68px;height:68px"></div>
<svg style="left:0;top:0" width="1024" height="768" viewBox="0 0 1024 768"><g fill="#000" shape-rendering="crispEdges"><rect x="659" y="459" width="2" height="2"/><rect x="663" y="471" width="2" height="2"/><rect x="673" y="445" width="2" height="2"/><rect x="672" y="459" width="2" height="2"/><rect x="683" y="446" width="2" height="2"/><rect x="695" y="447" width="2" height="2"/><rect x="701" y="436" width="2" height="2"/><rect x="712" y="444" width="2" height="2"/><rect x="714" y="434" width="2" height="2"/></g><path d="M659.25,472.38 C660.71,470.40 664.67,463.94 668.00,460.50 C671.33,457.06 675.08,454.35 679.25,451.75 C683.42,449.15 688.62,446.71 693.00,444.88 C697.38,443.04 701.17,442.06 705.50,440.75 C709.83,439.44 716.75,437.62 719.00,437.00" fill="none" stroke="#000" stroke-width="1"/></svg>
<div class="a sunken" style="left:749px;top:413px;width:68px;height:68px"></div>
<svg style="left:0;top:0" width="1024" height="768" viewBox="0 0 1024 768"><g fill="#000" shape-rendering="crispEdges"><rect x="752" y="472" width="2" height="2"/><rect x="757" y="462" width="2" height="2"/><rect x="761" y="469" width="2" height="2"/><rect x="769" y="449" width="2" height="2"/><rect x="780" y="463" width="2" height="2"/><rect x="793" y="471" width="2" height="2"/><rect x="795" y="457" width="2" height="2"/><rect x="802" y="438" width="2" height="2"/><rect x="804" y="450" width="2" height="2"/><rect x="805" y="423" width="2" height="2"/><rect x="812" y="425" width="2" height="2"/></g><path d="M756.25,475.50 C756.92,473.62 758.75,467.48 760.25,464.25 C761.75,461.02 763.58,457.96 765.25,456.12 C766.92,454.29 768.38,453.46 770.25,453.25 C772.12,453.04 774.21,453.56 776.50,454.88 C778.79,456.19 781.60,459.35 784.00,461.12 C786.40,462.90 788.79,465.19 790.88,465.50 C792.96,465.81 794.73,464.88 796.50,463.00 C798.27,461.12 800.04,457.79 801.50,454.25 C802.96,450.71 804.21,445.92 805.25,441.75 C806.29,437.58 807.02,432.69 807.75,429.25 C808.48,425.81 809.31,422.48 809.62,421.12" fill="none" stroke="#000" stroke-width="1"/></svg>
<div class="a sunken" style="left:557px;top:517px;width:68px;height:68px"></div>
<svg style="left:0;top:0" width="1024" height="768" viewBox="0 0 1024 768"><g fill="#000" shape-rendering="crispEdges"><rect x="563" y="574" width="2" height="2"/><rect x="575" y="577" width="2" height="2"/><rect x="576" y="562" width="2" height="2"/><rect x="589" y="564" width="2" height="2"/><rect x="589" y="571" width="2" height="2"/><rect x="591" y="553" width="2" height="2"/><rect x="596" y="540" width="2" height="2"/><rect x="602" y="550" width="2" height="2"/><rect x="601" y="528" width="2" height="2"/><rect x="606" y="533" width="2" height="2"/><rect x="609" y="522" width="2" height="2"/></g><path d="M563.25,579.50 L565.75,578.88 L568.25,576.38 L575.12,573.25 L582.00,568.88 L588.25,562.62 L594.50,555.12 L599.50,543.88 L603.25,533.25 L605.75,525.75 L606.62,521.00" fill="none" stroke="#000" stroke-width="1"/></svg>
<div class="a sunken" style="left:653px;top:517px;width:68px;height:68px"></div>
<svg style="left:0;top:0" width="1024" height="768" viewBox="0 0 1024 768"><g fill="#000" shape-rendering="crispEdges"><rect x="660" y="574" width="2" height="2"/><rect x="665" y="581" width="2" height="2"/><rect x="673" y="569" width="2" height="2"/><rect x="686" y="579" width="2" height="2"/><rect x="687" y="562" width="2" height="2"/><rect x="698" y="574" width="2" height="2"/><rect x="699" y="561" width="2" height="2"/><rect x="699" y="542" width="2" height="2"/><rect x="704" y="549" width="2" height="2"/><rect x="704" y="526" width="2" height="2"/><rect x="709" y="536" width="2" height="2"/></g><path d="M659.25,578.25 C661.54,578.25 669.25,578.50 673.00,578.25 C676.75,578.00 679.04,577.58 681.75,576.75 C684.46,575.92 687.17,574.77 689.25,573.25 C691.33,571.73 692.79,569.92 694.25,567.62 C695.71,565.33 696.75,562.73 698.00,559.50 C699.25,556.27 700.50,552.00 701.75,548.25 C703.00,544.50 704.46,539.92 705.50,537.00 C706.54,534.08 707.31,532.90 708.00,530.75 C708.69,528.60 709.35,525.23 709.62,524.12" fill="none" stroke="#000" stroke-width="1"/></svg>
<div class="a sunken" style="left:749px;top:517px;width:68px;height:68px"></div>
<svg style="left:0;top:0" width="1024" height="768" viewBox="0 0 1024 768"><g fill="#000" shape-rendering="crispEdges"><rect x="758" y="566" width="2" height="2"/><rect x="762" y="556" width="2" height="2"/><rect x="765" y="572" width="2" height="2"/><rect x="770" y="570" width="2" height="2"/><rect x="774" y="566" width="2" height="2"/><rect x="780" y="552" width="2" height="2"/><rect x="784" y="548" width="2" height="2"/><rect x="789" y="544" width="2" height="2"/><rect x="795" y="536" width="2" height="2"/><rect x="799" y="551" width="2" height="2"/><rect x="805" y="534" width="2" height="2"/></g><path d="M768.12,563.00 L774.88,566.00 L782.12,554.50 L787.12,550.75 L793.38,547.00 L797.75,545.75 L805.88,542.00" fill="none" stroke="#000" stroke-width="1"/></svg>
<svg style="left:558px;top:487px" width="12" height="12" viewBox="0 0 12 12"><circle cx="6" cy="6" r="5.5" fill="#fff"/><path d="M9.9,2.1 A5.5,5.5 0 0 0 2.1,9.9" fill="none" stroke="#808080" stroke-width="1"/><path d="M2.1,9.9 A5.5,5.5 0 0 0 9.9,2.1" fill="none" stroke="#fff" stroke-width="1"/><path d="M9.2,2.8 A4.5,4.5 0 0 0 2.8,9.2" fill="none" stroke="#404040" stroke-width="1"/><path d="M2.8,9.2 A4.5,4.5 0 0 0 9.2,2.8" fill="none" stroke="#d4d0c8" stroke-width="1"/><rect x="4" y="5" width="4" height="2" fill="#000" shape-rendering="crispEdges"/><rect x="5" y="4" width="2" height="4" fill="#000" shape-rendering="crispEdges"/></svg>
<span class="ms" id="L-radio0" style="left:575.50px;top:486px;transform:scaleX(0.8461);transform-origin:0 0;">L<u>i</u>neær</span>
<svg style="left:654px;top:487px" width="12" height="12" viewBox="0 0 12 12"><circle cx="6" cy="6" r="5.5" fill="#fff"/><path d="M9.9,2.1 A5.5,5.5 0 0 0 2.1,9.9" fill="none" stroke="#808080" stroke-width="1"/><path d="M2.1,9.9 A5.5,5.5 0 0 0 9.9,2.1" fill="none" stroke="#fff" stroke-width="1"/><path d="M9.2,2.8 A4.5,4.5 0 0 0 2.8,9.2" fill="none" stroke="#404040" stroke-width="1"/><path d="M2.8,9.2 A4.5,4.5 0 0 0 9.2,2.8" fill="none" stroke="#d4d0c8" stroke-width="1"/></svg>
<span class="ms" id="L-radio1" style="left:671.50px;top:486px;transform:scaleX(0.8178);transform-origin:0 0;"><u>L</u>ogaritmisk</span>
<svg style="left:750px;top:487px" width="12" height="12" viewBox="0 0 12 12"><circle cx="6" cy="6" r="5.5" fill="#fff"/><path d="M9.9,2.1 A5.5,5.5 0 0 0 2.1,9.9" fill="none" stroke="#808080" stroke-width="1"/><path d="M2.1,9.9 A5.5,5.5 0 0 0 9.9,2.1" fill="none" stroke="#fff" stroke-width="1"/><path d="M9.2,2.8 A4.5,4.5 0 0 0 2.8,9.2" fill="none" stroke="#404040" stroke-width="1"/><path d="M2.8,9.2 A4.5,4.5 0 0 0 9.2,2.8" fill="none" stroke="#d4d0c8" stroke-width="1"/></svg>
<span class="ms" id="L-radio2" style="left:767.50px;top:486px;transform:scaleX(0.8267);transform-origin:0 0;"><u>P</u>olynomisk</span>
<svg style="left:558px;top:591px" width="12" height="12" viewBox="0 0 12 12"><circle cx="6" cy="6" r="5.5" fill="#fff"/><path d="M9.9,2.1 A5.5,5.5 0 0 0 2.1,9.9" fill="none" stroke="#808080" stroke-width="1"/><path d="M2.1,9.9 A5.5,5.5 0 0 0 9.9,2.1" fill="none" stroke="#fff" stroke-width="1"/><path d="M9.2,2.8 A4.5,4.5 0 0 0 2.8,9.2" fill="none" stroke="#404040" stroke-width="1"/><path d="M2.8,9.2 A4.5,4.5 0 0 0 9.2,2.8" fill="none" stroke="#d4d0c8" stroke-width="1"/></svg>
<span class="ms" id="L-radio3" style="left:575.70px;top:590px;transform:scaleX(0.8458);transform-origin:0 0;">Pot<u>e</u>ns</span>
<svg style="left:654px;top:591px" width="12" height="12" viewBox="0 0 12 12"><circle cx="6" cy="6" r="5.5" fill="#fff"/><path d="M9.9,2.1 A5.5,5.5 0 0 0 2.1,9.9" fill="none" stroke="#808080" stroke-width="1"/><path d="M2.1,9.9 A5.5,5.5 0 0 0 9.9,2.1" fill="none" stroke="#fff" stroke-width="1"/><path d="M9.2,2.8 A4.5,4.5 0 0 0 2.8,9.2" fill="none" stroke="#404040" stroke-width="1"/><path d="M2.8,9.2 A4.5,4.5 0 0 0 9.2,2.8" fill="none" stroke="#d4d0c8" stroke-width="1"/></svg>
<span class="ms" id="L-radio4" style="left:671.69px;top:590px;transform:scaleX(0.8489);transform-origin:0 0;">E<u>k</u>sponentiell</span>
<svg style="left:750px;top:591px" width="12" height="12" viewBox="0 0 12 12"><circle cx="6" cy="6" r="5.5" fill="#fff"/><path d="M9.9,2.1 A5.5,5.5 0 0 0 2.1,9.9" fill="none" stroke="#808080" stroke-width="1"/><path d="M2.1,9.9 A5.5,5.5 0 0 0 9.9,2.1" fill="none" stroke="#fff" stroke-width="1"/><path d="M9.2,2.8 A4.5,4.5 0 0 0 2.8,9.2" fill="none" stroke="#404040" stroke-width="1"/><path d="M2.8,9.2 A4.5,4.5 0 0 0 9.2,2.8" fill="none" stroke="#d4d0c8" stroke-width="1"/></svg>
<span class="ms" id="L-radio5" style="left:767.50px;top:590px;transform:scaleX(0.8413);transform-origin:0 0;"><u>B</u>evegelig gjennomsnitt</span>
<span class="ms" id="L-lab445" style="left:829.00px;top:445px;transform:scaleX(0.8405);transform-origin:0 0;"><u>O</u>rden:</span>
<div class="a sunken" style="left:829px;top:462px;width:33px;height:20px"></div>
<span class="ms" id="L-two445" style="left:833.00px;top:464px;transform:scaleX(0.8800);transform-origin:0 0;color:#808080;">2</span>
<div class="a raised" style="left:862px;top:462px;width:15px;height:10px"></div><div class="a raised" style="left:862px;top:472px;width:15px;height:10px"></div><svg style="left:862px;top:462px" width="15" height="20" viewBox="0 0 15 20" shape-rendering="crispEdges"><rect x="6" y="4" width="1" height="1" fill="#808080"/><rect x="5" y="5" width="3" height="1" fill="#808080"/><rect x="5" y="14" width="3" height="1" fill="#808080"/><rect x="6" y="15" width="1" height="1" fill="#808080"/><rect x="6" y="6" width="3" height="1" fill="#fff"/><rect x="7" y="16" width="1" height="1" fill="#fff"/></svg>
<span class="ms" id="L-lab549" style="left:829.21px;top:549px;transform:scaleX(0.8379);transform-origin:0 0;">Pe<u>r</u>iode:</span>
<div class="a sunken" style="left:829px;top:566px;width:33px;height:20px"></div>
<span class="ms" id="L-two549" style="left:833.00px;top:568px;transform:scaleX(0.8800);transform-origin:0 0;color:#808080;">2</span>
<div class="a raised" style="left:862px;top:566px;width:15px;height:10px"></div><div class="a raised" style="left:862px;top:576px;width:15px;height:10px"></div><svg style="left:862px;top:566px" width="15" height="20" viewBox="0 0 15 20" shape-rendering="crispEdges"><rect x="6" y="4" width="1" height="1" fill="#808080"/><rect x="5" y="5" width="3" height="1" fill="#808080"/><rect x="5" y="14" width="3" height="1" fill="#808080"/><rect x="6" y="15" width="1" height="1" fill="#808080"/><rect x="6" y="6" width="3" height="1" fill="#fff"/><rect x="7" y="16" width="1" height="1" fill="#fff"/></svg>
<div class="a" id="grp" style="left:897px;top:402px;width:140px;height:115px;border:1px solid #808080;box-shadow:1px 1px #fff,inset 1px 1px #fff"></div>
<div class="a" style="left:903px;top:398px;width:26px;height:10px;background:#d4d0c8"></div>
<span class="ms" id="L-linje" style="left:905.17px;top:397px;transform:scaleX(0.8358);transform-origin:0 0;">Linje</span>
<span class="ms" id="L-type" style="left:909.02px;top:421px;transform:scaleX(0.8581);transform-origin:0 0;">T<u>y</u>pe:</span>
<span class="ms" id="L-farge" style="left:908.70px;top:451px;transform:scaleX(0.8207);transform-origin:0 0;"><u>F</u>arge:</span>
<span class="ms" id="L-tykk" style="left:908.70px;top:487px;transform:scaleX(0.8800);transform-origin:0 0;"><u>T</u>ykkelse:</span>
<div class="a sunken" style="left:965px;top:416px;width:80px;height:22px"></div>
<div class="a" style="left:968px;top:427px;width:60px;height:2px;background:#000"></div>
<div class="a sunken" style="left:965px;top:449px;width:80px;height:22px"></div>
<div class="a" style="left:969px;top:453px;width:60px;height:14px;background:#ff0000;border:1px solid #000"></div>
<div class="a sunken" style="left:965px;top:483px;width:41px;height:21px"></div>
<span class="ms" id="L-one" style="left:968.50px;top:486.5px;transform:scaleX(0.8800);transform-origin:0 0;">1</span>
<div class="a raised" style="left:1006px;top:483px;width:15px;height:10px"></div><div class="a raised" style="left:1006px;top:493px;width:15px;height:11px"></div><svg style="left:1006px;top:483px" width="15" height="21" viewBox="0 0 15 21" shape-rendering="crispEdges"><rect x="6" y="4" width="1" height="1" fill="#000"/><rect x="5" y="5" width="3" height="1" fill="#000"/><rect x="5" y="14" width="3" height="1" fill="#000"/><rect x="6" y="15" width="1" height="1" fill="#000"/></svg>
<div class="a sunken" style="left:897px;top:543px;width:13px;height:13px"></div>
<span class="ms" id="L-skj" style="left:915.70px;top:542px;transform:scaleX(0.8538);transform-origin:0 0;"><u>S</u>kjæring =</span>
<div class="a sunken" style="left:973px;top:539px;width:80px;height:20px"></div>
<span class="ms" id="L-zero" style="left:977.00px;top:542px;transform:scaleX(0.8800);transform-origin:0 0;">0</span>
<div class="a" style="left:633px;top:637px;width:75px;height:25px;background:#000"></div>
<div class="a raised" style="left:634px;top:638px;width:73px;height:23px"></div>
<div class="btn raised" style="left:721px;top:637px"></div>
<div class="btn raised" style="left:809px;top:637px"></div>
<span class="ms" id="L-ok" style="left:663.40px;top:642px;transform:scaleX(0.8575);transform-origin:0 0;">OK</span>
<span class="ms" id="L-avbryt" style="left:742.50px;top:642px;transform:scaleX(0.8546);transform-origin:0 0;">Avbryt</span>
<span class="ms" id="L-hjelp" style="left:833.43px;top:642px;transform:scaleX(0.8671);transform-origin:0 0;">Hjelp</span>
<svg style="left:0;top:0" width="1024" height="768" viewBox="0 0 1024 768"><line x1="273" y1="392.4" x2="570.3" y2="435.2" stroke="#ff0000" stroke-width="5" stroke-linecap="round"/></svg>
</div>
</body></html>
